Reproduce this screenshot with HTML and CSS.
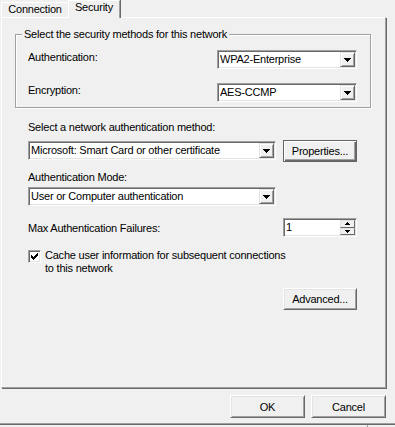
FILE: index.html
```
<!DOCTYPE html>
<html>
<head>
<meta charset="utf-8">
<link rel="stylesheet" href="styles.css">
</head>
<body>
<div class="dialog">
  <div class="tabs">
    <div class="tab">Connection</div>
    <div class="tab active">Security</div>
  </div>
  <div class="page">
    <fieldset class="group">
      <legend>Select the security methods for this network</legend>
      <div class="grid">
        <span class="grid-label">Authentication:</span>
        <div class="combo"><span class="combo-text">WPA2-Enterprise</span><span class="drop"><svg width="7" height="4" viewBox="0 0 7 4" shape-rendering="crispEdges"><path d="M0 0h7v1h-1v1h-1v1h-1v1h-1v-1h-1v-1h-1v-1h-1z"/></svg></span></div>
        <span class="grid-label">Encryption:</span>
        <div class="combo"><span class="combo-text">AES-CCMP</span><span class="drop"><svg width="7" height="4" viewBox="0 0 7 4" shape-rendering="crispEdges"><path d="M0 0h7v1h-1v1h-1v1h-1v1h-1v-1h-1v-1h-1v-1h-1z"/></svg></span></div>
      </div>
    </fieldset>
    <div class="section">
      <div class="label first">Select a network authentication method:</div>
      <div class="row method">
        <div class="combo wide"><span class="combo-text">Microsoft: Smart Card or other certificate</span><span class="drop"><svg width="7" height="4" viewBox="0 0 7 4" shape-rendering="crispEdges"><path d="M0 0h7v1h-1v1h-1v1h-1v1h-1v-1h-1v-1h-1v-1h-1z"/></svg></span></div>
        <button class="btn default">Properties...</button>
      </div>
      <div class="label mode">Authentication Mode:</div>
      <div class="combo wide mode-combo"><span class="combo-text">User or Computer authentication</span><span class="drop"><svg width="7" height="4" viewBox="0 0 7 4" shape-rendering="crispEdges"><path d="M0 0h7v1h-1v1h-1v1h-1v1h-1v-1h-1v-1h-1v-1h-1z"/></svg></span></div>
      <div class="row failures">
        <span>Max Authentication Failures:</span>
        <div class="spin">
          <span class="combo-text">1</span>
          <span class="spin-btns">
            <span class="spin-btn up"><svg width="5" height="3" viewBox="0 0 5 3" shape-rendering="crispEdges"><path d="M2 0h1v1h1v1h1v1h-5v-1h1v-1h1z"/></svg></span>
            <span class="spin-btn down"><svg width="5" height="3" viewBox="0 0 5 3" shape-rendering="crispEdges"><path d="M0 0h5v1h-1v1h-1v1h-1v-1h-1v-1h-1z"/></svg></span>
          </span>
        </div>
      </div>
      <div class="check-row">
        <span class="checkbox"><svg width="7" height="7" viewBox="0 0 7 7" shape-rendering="crispEdges"><path d="M6 0h1v1h-1z M5 1h2v1h-2z M0 2h1v1h-1z M4 2h3v1h-3z M0 3h2v1h-2z M3 3h3v1h-3z M0 4h5v1h-5z M1 5h3v1h-3z M2 6h1v1h-1z"/></svg></span>
        <span class="check-text">Cache user information for subsequent connections<br>to this network</span>
      </div>
      <div class="row advanced">
        <button class="btn">Advanced...</button>
      </div>
    </div>
  </div>
  <div class="footer">
    <button class="btn">OK</button>
    <button class="btn">Cancel</button>
  </div>
  <div class="bottom-line"></div>
  <div class="status"><span class="grip"></span></div>
</div>
</body>
</html>
```
FILE: styles.css
```
* {
  box-sizing: border-box;
}

html, body {
  margin: 0;
  padding: 0;
  background: #f0f0f0;
}

body {
  font-family: "Liberation Sans", Arial, sans-serif;
  font-size: 11px;
  letter-spacing: -0.22px;
  color: #000;
}

.dialog {
  width: 395px;
  height: 427px;
  overflow: hidden;
  display: flex;
  flex-direction: column;
}

.tabs {
  display: flex;
  align-items: flex-end;
  height: 17px;
  padding-left: 1px;
}

.tab {
  height: 15px;
  width: 67px;
  line-height: 13px;
  text-align: center;
  background: #f0f0f0;
  border-top: 1px solid #fff;
  border-left: 1px solid #fff;
}

.tab.active {
  position: relative;
  z-index: 1;
  width: 52px;
  height: 18px;
  margin-bottom: -1px;
  line-height: 12px;
  border-right: 1px solid #a0a0a0;
  box-shadow: 1px 0 0 #696969;
}

.page {
  margin-left: 1px;
  width: 385px;
  height: 371px;
  flex: none;
  border-top: 1px solid #fff;
  border-left: 1px solid #fff;
  border-right: 1px solid #a0a0a0;
  border-bottom: 1px solid #a0a0a0;
  box-shadow: 1px 1px 0 #696969;
  padding-left: 13px;
}

.group {
  margin: 10px 0 0 0;
  width: 356px;
  min-inline-size: 0;
  padding: 10px 13px 5px 6px;
  border: 1px solid #a0a0a0;
  box-shadow: inset 1px 1px 0 #fff, 1px 1px 0 #fff;
}

.group legend {
  padding: 0 2px;
  line-height: 12px;
  background: #f0f0f0;
}

.grid {
  display: grid;
  grid-template-columns: 1fr 140px;
  row-gap: 14px;
  align-items: center;
  padding-left: 6px;
}

.grid-label {
  align-self: start;
  line-height: 13px;
  margin-top: 1px;
}

.combo,
.spin {
  height: 19px;
  display: flex;
  align-items: center;
  background: #fff;
  border: 1px solid;
  border-color: #a0a0a0 #fff #fff #a0a0a0;
  box-shadow: inset 1px 1px 0 #696969, inset -1px -1px 0 #e3e3e3;
  padding-left: 2px;
  white-space: nowrap;
}

.combo-text {
  flex: 1;
  overflow: hidden;
  line-height: 13px;
}

.drop {
  width: 15px;
  height: 15px;
  margin-right: 1px;
  display: flex;
  align-items: center;
  justify-content: center;
  padding-top: 1px;
  background: #f0f0f0;
  border: 1px solid;
  border-color: #e3e3e3 #696969 #696969 #e3e3e3;
  box-shadow: inset 1px 1px 0 #fff, inset -1px -1px 0 #a0a0a0;
}

.drop svg,
.spin-btn svg {
  display: block;
  fill: #000;
}

.section {
  margin-left: 13px;
  width: 329px;
}

.label {
  line-height: 13px;
}

.label.first {
  margin-top: 13px;
}

.row {
  display: flex;
  justify-content: space-between;
}

.row.method {
  margin-top: 6px;
  align-items: flex-start;
}

.combo.wide {
  width: 248px;
}

.row.method .combo {
  margin-top: 1px;
}

.label.mode {
  margin-top: 9px;
}

.mode-combo {
  margin-top: 3px;
}

.row.failures {
  margin-top: 12px;
  align-items: center;
}

.spin {
  width: 74px;
}

.spin-btns {
  width: 15px;
  height: 15px;
  margin-right: 1px;
  display: flex;
  flex-direction: column;
}

.spin-btn {
  flex: 1;
  display: flex;
  align-items: center;
  justify-content: center;
  background: #f0f0f0;
  border: 1px solid;
  border-color: #e3e3e3 #696969 #696969 #e3e3e3;
}

.check-row {
  margin-top: 12px;
  display: flex;
  align-items: flex-start;
}

.checkbox {
  width: 13px;
  height: 13px;
  margin-top: 1px;
  flex: none;
  display: flex;
  align-items: center;
  justify-content: center;
  background: #fff;
  border: 1px solid;
  border-color: #a0a0a0 #fff #fff #a0a0a0;
  box-shadow: inset 1px 1px 0 #696969, inset -1px -1px 0 #e3e3e3;
}

.checkbox svg {
  display: block;
  fill: #000;
}

.check-text {
  margin-left: 4px;
  line-height: 13px;
}

.row.advanced {
  margin-top: 13px;
  justify-content: flex-end;
}

.btn {
  width: 74px;
  height: 22px;
  padding: 0;
  margin: 0;
  font-family: inherit;
  font-size: 11px;
  letter-spacing: -0.22px;
  color: #000;
  background: #f0f0f0;
  border: 1px solid;
  border-color: #fff #696969 #696969 #fff;
  box-shadow: inset 1px 1px 0 #e3e3e3, inset -1px -1px 0 #a0a0a0;
  border-radius: 0;
}

.btn.default {
  border-color: #646464;
  box-shadow: inset 1px 1px 0 #fff, inset -1px -1px 0 #696969, inset -2px -2px 0 #a0a0a0;
}

.footer {
  margin-top: 7px;
  display: flex;
  justify-content: flex-end;
  gap: 6px;
  padding-right: 9px;
}

.footer .btn {
  width: 75px;
  height: 23px;
}

.bottom-line {
  margin-top: 5px;
  height: 2px;
  border-top: 1px solid #a0a0a0;
  border-bottom: 1px solid #696969;
}

.status {
  flex: 1;
  position: relative;
}

.grip {
  display: block;
  margin-left: 367px;
  width: 1px;
  height: 3px;
  background: #a0a0a0;
}
```
